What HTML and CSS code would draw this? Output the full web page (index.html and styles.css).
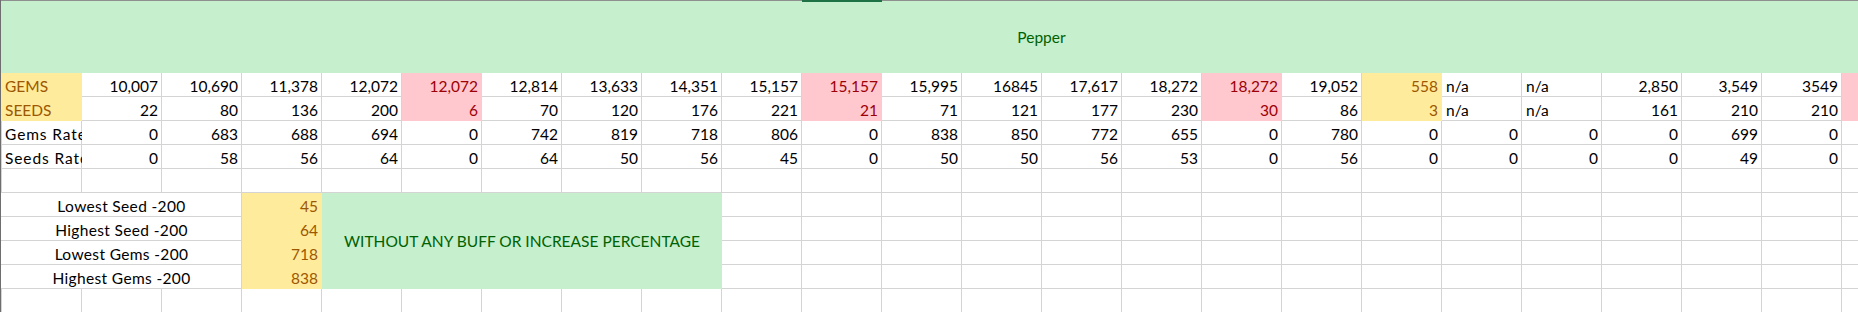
FILE: index.html
```html
<!DOCTYPE html>
<html>
<head>
<meta charset="utf-8">
<link rel="stylesheet" href="styles.css">
</head>
<body>
<div class="sheet">
  <div class="topbar"><div class="sel"></div></div>
  <div class="title">Pepper</div>
  <div class="grid">
    <!-- GEMS -->
    <div class="c l y first">GEMS</div>
    <div class="c">10,007</div><div class="c">10,690</div><div class="c">11,378</div><div class="c">12,072</div>
    <div class="c p">12,072</div><div class="c">12,814</div><div class="c">13,633</div><div class="c">14,351</div>
    <div class="c">15,157</div><div class="c p">15,157</div><div class="c">15,995</div><div class="c">16845</div>
    <div class="c">17,617</div><div class="c">18,272</div><div class="c p">18,272</div><div class="c">19,052</div>
    <div class="c y">558</div><div class="c l">n/a</div><div class="c l">n/a</div><div class="c">2,850</div>
    <div class="c">3,549</div><div class="c">3549</div><div class="c p"></div>
    <!-- SEEDS -->
    <div class="c l y first">SEEDS</div>
    <div class="c">22</div><div class="c">80</div><div class="c">136</div><div class="c">200</div>
    <div class="c p">6</div><div class="c">70</div><div class="c">120</div><div class="c">176</div>
    <div class="c">221</div><div class="c p">21</div><div class="c">71</div><div class="c">121</div>
    <div class="c">177</div><div class="c">230</div><div class="c p">30</div><div class="c">86</div>
    <div class="c y">3</div><div class="c l">n/a</div><div class="c l">n/a</div><div class="c">161</div>
    <div class="c">210</div><div class="c">210</div><div class="c p"></div>
    <!-- Gems Rate -->
    <div class="c l wide first">Gems Rate</div>
    <div class="c">0</div><div class="c">683</div><div class="c">688</div><div class="c">694</div>
    <div class="c">0</div><div class="c">742</div><div class="c">819</div><div class="c">718</div>
    <div class="c">806</div><div class="c">0</div><div class="c">838</div><div class="c">850</div>
    <div class="c">772</div><div class="c">655</div><div class="c">0</div><div class="c">780</div>
    <div class="c">0</div><div class="c">0</div><div class="c">0</div><div class="c">0</div>
    <div class="c">699</div><div class="c">0</div>
    <!-- Seeds Rate -->
    <div class="c l wide first">Seeds Rate</div>
    <div class="c">0</div><div class="c">58</div><div class="c">56</div><div class="c">64</div>
    <div class="c">0</div><div class="c">64</div><div class="c">50</div><div class="c">56</div>
    <div class="c">45</div><div class="c">0</div><div class="c">50</div><div class="c">50</div>
    <div class="c">56</div><div class="c">53</div><div class="c">0</div><div class="c">56</div>
    <div class="c">0</div><div class="c">0</div><div class="c">0</div><div class="c">0</div>
    <div class="c">49</div><div class="c">0</div>
    <!-- blank row -->
    <div class="blank-row"></div>
    <!-- summary -->
    <div class="c label first">Lowest Seed -200</div>
    <div class="c y">45</div>
    <div class="note">WITHOUT ANY BUFF OR INCREASE PERCENTAGE</div>
    <div class="c label first">Highest Seed -200</div>
    <div class="c y">64</div>
    <div class="c label first">Lowest Gems -200</div>
    <div class="c y">718</div>
    <div class="c label first">Highest Gems -200</div>
    <div class="c y">838</div>
    <div class="blank-row"></div>
  </div>
</div>
</body>
</html>
```

FILE: styles.css
```css
html, body {
  margin: 0;
  padding: 0;
  background: #ffffff;
  overflow: hidden;
}

body {
  width: 1858px;
  height: 312px;
}

.sheet {
  width: 2081px;
  border-left: 1px solid #6e6e6e;
  font-family: Lato, "Open Sans", "Liberation Sans", sans-serif;
  font-size: 15.5px;
  color: #000000;
}

.topbar {
  height: 2px;
  display: grid;
  grid-template-columns: 81px repeat(25, 80px);
  background: linear-gradient(#8f8f8f 1px, #c6efce 1px);
}

.topbar .sel {
  grid-column: 11;
  background: #1e7145;
}

.title {
  height: 71px;
  line-height: 71px;
  background: #c6efce;
  color: #006100;
  text-align: center;
}

.grid {
  display: grid;
  grid-template-columns: 81px repeat(25, 80px);
  grid-auto-rows: 24px;
  background-color: #ffffff;
  background-image:
    linear-gradient(to right, transparent 79px, #d4d4d4 79px),
    linear-gradient(to bottom, transparent 23px, #d4d4d4 23px);
  background-size: 80px 24px, 80px 24px;
  background-position: 1px 0, 0 0;
}

.c {
  box-sizing: border-box;
  padding: 1px 4px 0 4px;
  line-height: 24px;
  white-space: nowrap;
  overflow: hidden;
  text-align: right;
}

.c.l {
  text-align: left;
}

.c.wide {
  padding-right: 1px;
  letter-spacing: 0.9px;
  text-overflow: clip;
}

.first {
  grid-column-start: 1;
}

.y {
  background: #ffeb9c;
  color: #9c5700;
}

.p {
  background: #ffc7ce;
  color: #9c0006;
}

.blank-row {
  grid-column: 1 / -1;
}

.label {
  grid-column: 1 / span 3;
  text-align: center;
  letter-spacing: 0.35px;
  background: #ffffff;
  box-shadow: inset -1px -1px 0 #d4d4d4;
}

.note {
  grid-column: span 5;
  grid-row: span 4;
  background: #c6efce;
  color: #006100;
  display: flex;
  align-items: center;
  justify-content: center;
  white-space: nowrap;
}
```
